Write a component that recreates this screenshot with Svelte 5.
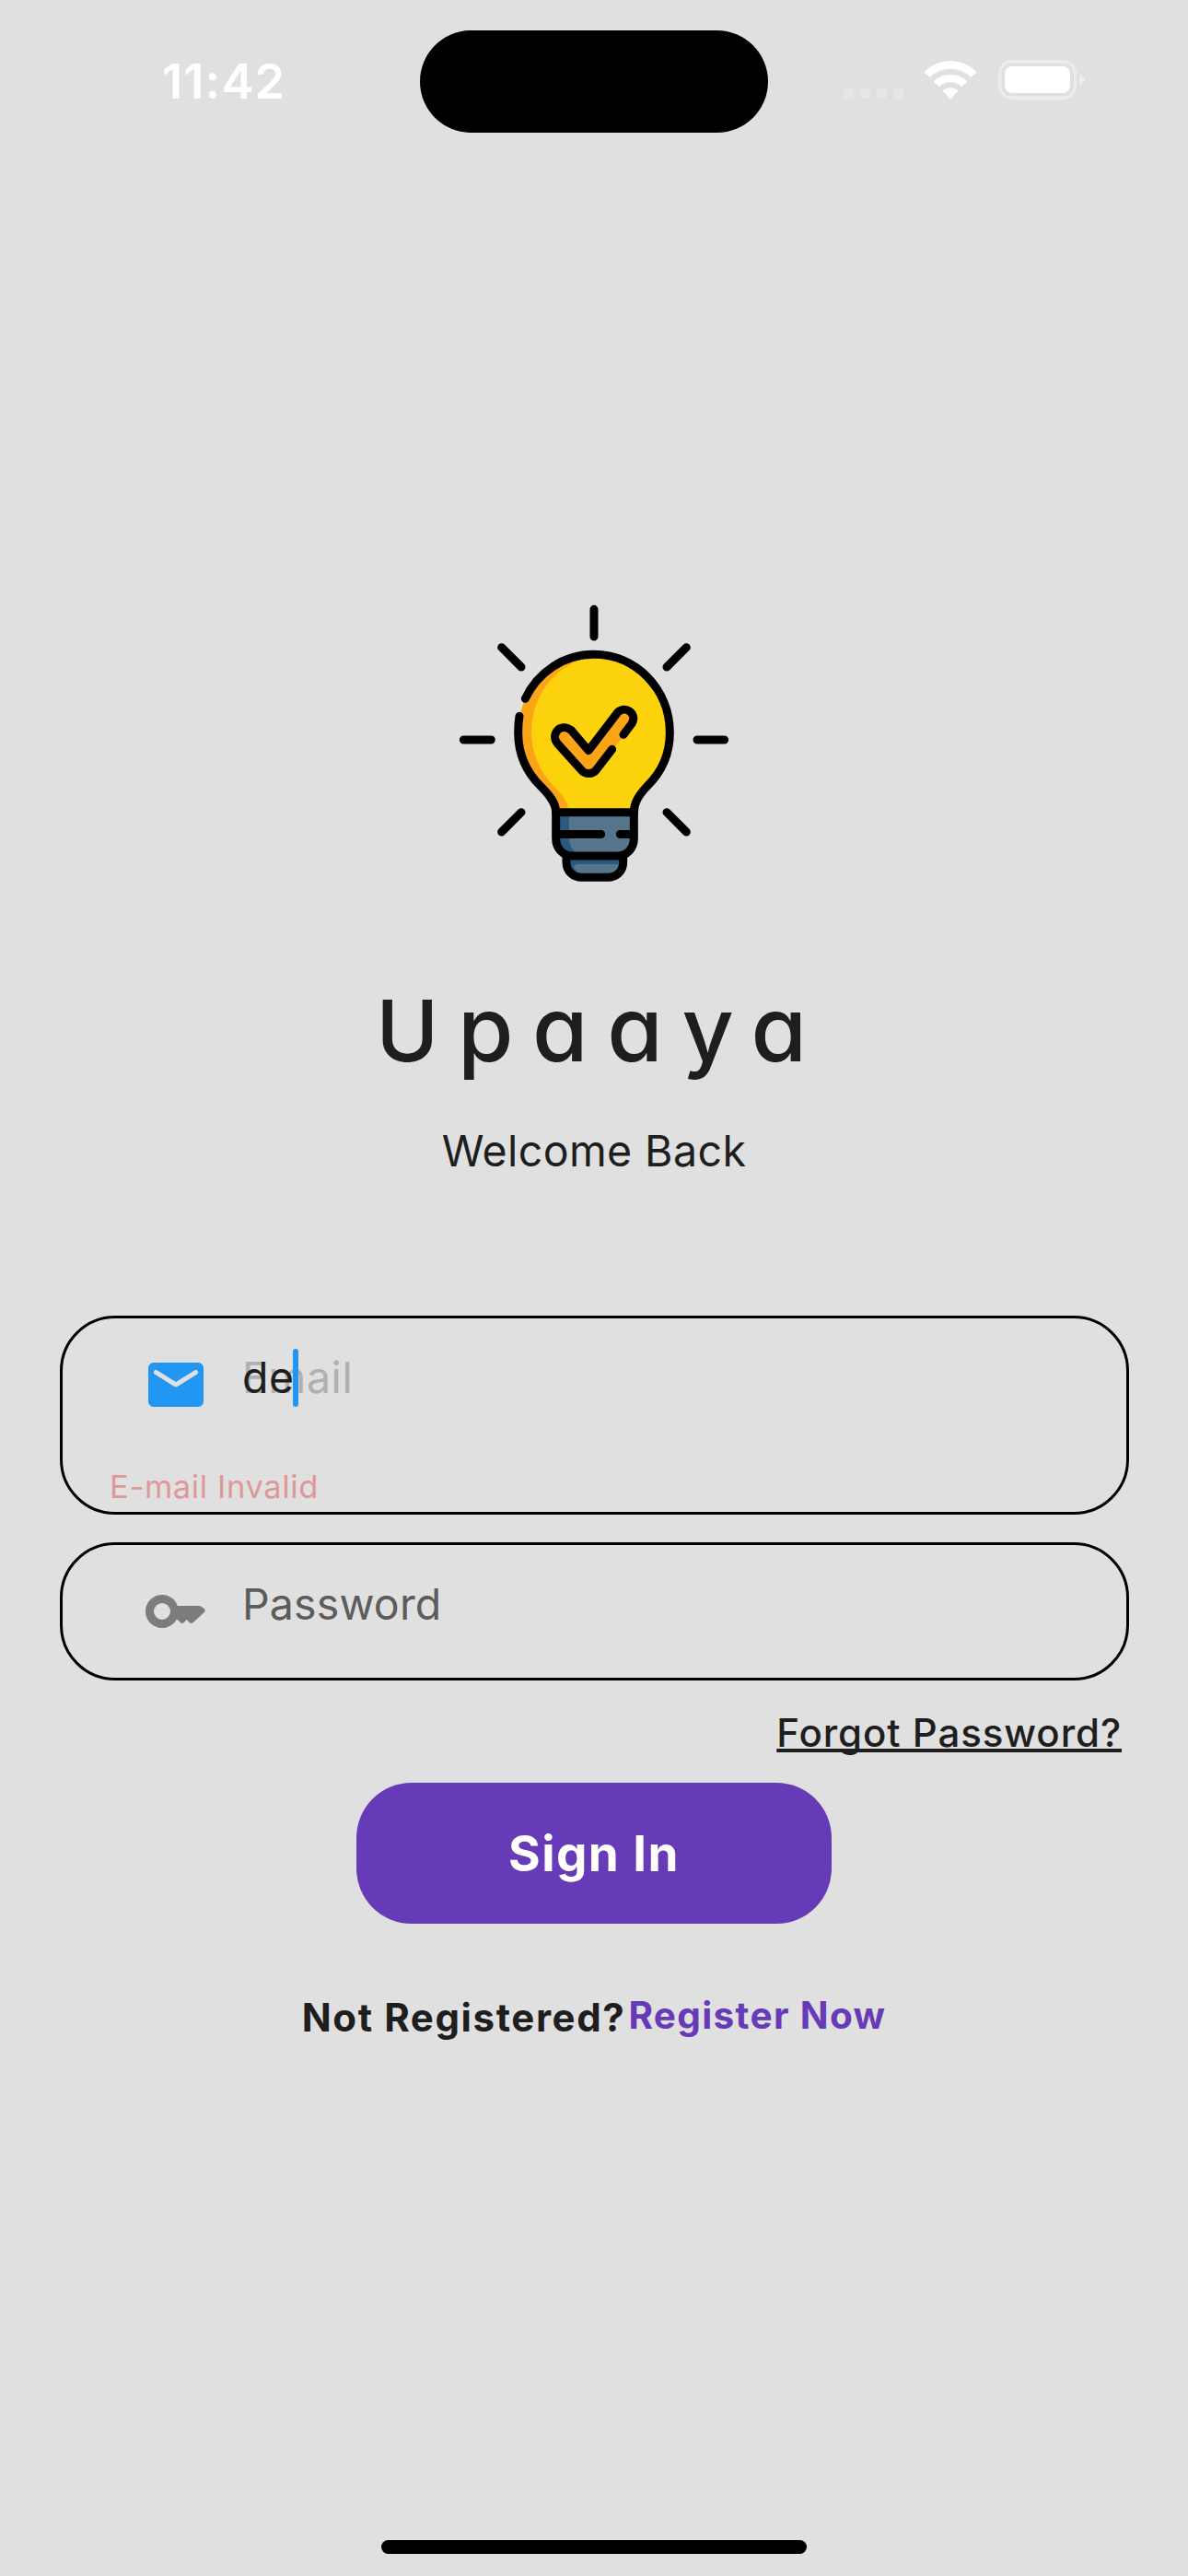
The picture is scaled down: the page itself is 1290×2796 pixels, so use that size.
<script>
  const dots = [0, 1, 2, 3];
</script>

<div class="screen">
  <header class="status">
    <span class="time">11:42</span>
    <div class="island"></div>
    <div class="indicators">
      <div class="dots">{#each dots as d (d)}<i></i>{/each}</div>
      <svg class="wifi" viewBox="0 0 58 43" width="58" height="43">
        <g fill="#fff" stroke="#fff" stroke-width="1" stroke-linejoin="round">
          <path d="M1 13 A40 40 0 0 1 57 13 L51.500 18.500 A32 32 0 0 0 6.500 18.500 Z" />
          <path d="M11 23.500 A26 26 0 0 1 47 23.500 L41.500 28.800 A18 18 0 0 0 16.500 28.800 Z" />
          <path d="M21 33.500 A13 13 0 0 1 37 33.500 L29 42 Z" />
        </g>
      </svg>
      <svg class="battery" viewBox="0 0 94 43" width="94" height="43">
        <rect x="1.700" y="1.700" width="81.600" height="39.600" rx="13" fill="none" stroke="#ececec" stroke-width="3.400" />
        <rect x="7" y="7" width="71" height="29" rx="8" fill="#fff" />
        <path d="M88 14.500 Q93.500 17 93.500 21.500 Q93.500 26 88 28.500 Z" fill="#ececec" />
      </svg>
    </div>
  </header>

  <main>
    <svg class="bulb" viewBox="0 0 990 990" width="330" height="330">
      <path d="M370 720 C365 690 345 668 320 645 C275 600 248 535 248 465 C248 320 360 210 495 210 C632 210 742 325 742 465 C742 535 715 595 672 640 C645 666 628 690 625 725 Z" fill="#fbd20b" />
      <path d="M400 720 L370 720 C365 690 345 668 320 645 C275 600 248 535 248 465 C248 340 335 240 445 217 L440 232 C350 270 291 360 291 465 C291 530 318 590 358 634 C385 662 409 685 412 720 Z" fill="#fba417" />
      <path d="M371 725 H625 V808 C625 840 605 867 570 867 H430 C395 867 371 840 371 808 Z" fill="#54758c" />
      <path d="M371 725 H414 V808 C414 830 422 845 436 858 H420 C390 855 371 835 371 808 Z" fill="#2b5980" />
      <path d="M404 867 H590 V885 C590 918 568 937 540 937 H455 C425 937 404 915 404 885 Z" fill="#54758c" />
      <path d="M404 867 H590 V894 H440 Q430 894 430 904 Q436 920 455 930 C425 930 404 915 404 885 Z" fill="#2b5980" />
      <path d="M368 478 C368 452 402 437 424 461 L477 524 L570 401 C598 375 640 405 618 440 L505 587 C492 602 470 603 456 590 L376 500 Z" fill="#fba417" />
      <g fill="none" stroke="#000" stroke-width="27" stroke-linecap="round" stroke-linejoin="round">
        <path d="M495 64 V153 M194 188 L258 252 M796 188 L732 252 M70 489 H160 M831 489 H920 M258 725 L194 789 M732 725 L796 789" />
        <path d="M271 355 C312 268 397 211 495 211 C632 211 742 325 742 465 C742 535 715 594 669 639 C642 668 625 692 625 725 V810 C625 842 604 867 570 867 H425 C393 867 371 842 371 810 V725 C371 693 347 666 322 641 C275 595 248 535 248 465 Q248 436 252 412" />
        <path d="M371 725.500 H625 M378 796.500 H518 M580 796.500 H620 M405 867 V888 C405 917 427 937 455 937 H540 C568 937 590 917 590 888 V867" />
        <path d="M554 520 L502 587 C490 602 468 602 455 589 L376 501 C352 471 385 431 421 458 L477 524 L571 401 C596 375 638 403 618 436 L591 472" />
      </g>
    </svg>

    <h1>Upaaya</h1>
    <p class="welcome">Welcome Back</p>

    <form onsubmit={(e) => e.preventDefault()}>
      <div class="field email">
        <div class="row">
          <svg viewBox="0 0 24 24" width="72" height="72" fill="#2196f3">
            <path d="M20 4H4c-1.100 0-2 .9-2 2v12c0 1.100.9 2 2 2h16c1.100 0 2-.9 2-2V6c0-1.100-.9-2-2-2zm-.4 4.250l-7.070 4.420c-.32.2-.74.2-1.060 0L4.400 8.250a.85.85 0 1 1 .9-1.440L12 11l6.700-4.190a.85.85 0 1 1 .9 1.440z" />
          </svg>
          <div class="entry"><span class="value">de</span><span class="hint">Email</span><i class="caret"></i></div>
        </div>
        <p class="error">E-mail Invalid</p>
      </div>
      <div class="field">
        <div class="row">
          <svg viewBox="0 0 24 24" width="72" height="72" fill="#7c7c7c">
            <path fill-rule="evenodd" d="M7 6a6 6 0 1 0 5.200 9h.4l1 1q.65.650 1.300 0l1-1 1 1q.65.650 1.300.1l4.100-3.800q.5-.6 0-1.200l-1-.8q-.4-.3-1-.3H12.600A6 6 0 0 0 7 6zm0 3a3 3 0 1 1 0 6a3 3 0 0 1 0-6z" />
          </svg>
          <span class="label">Password</span>
        </div>
      </div>
      <a class="forgot" href="#forgot">Forgot Password?</a>
      <button type="submit">Sign In</button>
    </form>

    <div class="register">
      <span>Not Registered?</span><a href="#register">Register Now</a>
    </div>
  </main>

  <div class="home"></div>
</div>

<style>
  :global(body) { background: #e0e0e0; }
  * { box-sizing: border-box; }
  .screen { width: 1290px; height: 2796px; overflow: hidden; background: #e0e0e0; color: #1e1e1e; font-family: Inter, sans-serif; display: flex; flex-direction: column; }
  .status { height: 177px; flex: none; display: grid; grid-template-columns: 456px 378px 1fr; align-items: start; }
  .time { padding: 56px 0 0 176px; font-size: 52.5px; line-height: 64px; font-weight: 600; letter-spacing: 1.1px; color: #fff; }
  .island { margin-top: 33px; height: 111px; border-radius: 56px; background: #000; }
  .indicators { display: flex; align-items: flex-start; padding: 65px 0 0 82px; }
  .dots { display: flex; gap: 7px; padding-top: 31px; }
  .dots i { width: 11px; height: 11px; border-radius: 3.5px; background: #e6e6e6; }
  .wifi { margin-left: 22px; }
  .battery { margin-left: 23px; }
  main { flex: 1; display: flex; flex-direction: column; align-items: center; padding-top: 463px; }
  .bulb { flex: none; }
  h1 { height: 112px; margin: 91px 0 0; padding-left: 15px; font-size: 98px; line-height: 112px; font-weight: 550; letter-spacing: 20.6px; font-feature-settings: "cv11"; font-optical-sizing: none; white-space: nowrap; }
  h1::first-letter { font-size: 92px; }
  .welcome { margin: 46px 0 0; font-size: 46.5px; line-height: 60px; letter-spacing: 0.4px; }
  form { width: 1161px; margin-top: 149px; display: flex; flex-direction: column; }
  .field { height: 150px; border: 3px solid #000; border-radius: 60px; padding: 34px 0 0 87.5px; }
  .email { height: 216px; margin-bottom: 30px; }
  .row { display: flex; align-items: flex-start; gap: 36px; height: 126px; font-size: 46.5px; line-height: 60px; }
  .row svg { margin-top: 2px; flex: none; }
  .entry { display: grid; position: relative; letter-spacing: 0.6px; }
  .entry span { grid-area: 1 / 1; }
  .value { z-index: 1; }
  .hint { color: #b0b0b0; }
  .caret { position: absolute; z-index: 2; left: 55px; top: -1px; width: 6px; height: 63px; border-radius: 3px; background: #2196f3; }
  .error { margin: 0 0 0 -36px; font-size: 34.6px; line-height: 44px; letter-spacing: 0.6px; color: #dd9999; }
  .label { color: #5c5c5c; letter-spacing: 0.15px; }
  .forgot { align-self: flex-end; margin: 32px 7.5px 0 0; font-size: 42px; line-height: 50px; letter-spacing: 0.93px; font-weight: 500; color: inherit; text-decoration: underline; text-decoration-thickness: 3.5px; text-underline-offset: 2px; text-decoration-skip-ink: none; }
  button { align-self: center; margin: 29px 0 0; width: 516px; height: 153px; border: 0; border-radius: 60px; background: #673ab7; color: #fff; font: 700 53px/64px Inter, sans-serif; letter-spacing: 1.4px; }
  .register { display: flex; gap: 3px; margin-top: 77px; font-size: 42px; line-height: 50px; font-weight: 700; letter-spacing: 1.6px; }
  .register a { font-size: 40.5px; line-height: 45px; letter-spacing: 1.35px; color: #673ab7; text-decoration: none; }
  .home { width: 462px; height: 15px; border-radius: 8px; background: #000; margin: 0 auto 24px; flex: none; }
</style>
